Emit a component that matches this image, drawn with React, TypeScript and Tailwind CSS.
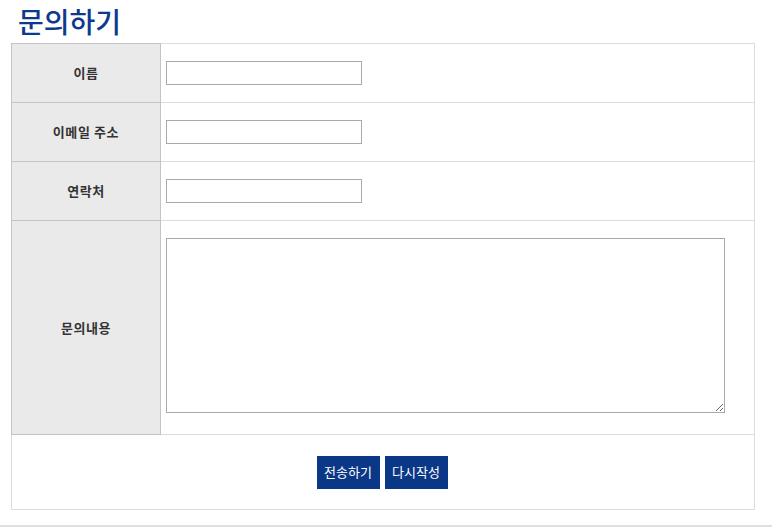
import React from "react";

const font = { fontFamily: '"Malgun Gothic", "Noto Sans CJK KR", "Noto Sans", sans-serif' };

function HeaderCell({ children }: { children: React.ReactNode }) {
  return (
    <th className="w-[149px] bg-[#eaeaea] border border-[#c4c4c4] text-[13px] tracking-[0.6px] font-bold text-[#333] text-center align-middle">
      {children}
    </th>
  );
}

export default function App() {
  return (
    <div className="w-[772px] h-[530px] bg-white" style={font}>
      <h2 className="pl-[18px] pt-[2px] h-[43px] text-[28px] leading-[38px] font-medium text-[#0d3a8c]">
        문의하기
      </h2>

      <div className="pl-[11px] pb-[15px] border-b-2 border-[#e0e0e0]">
        <table className="w-[744px] border-collapse border border-[#dcdcdc]">
          <tbody>
            <tr className="h-[59px] border-b border-[#dcdcdc]">
              <HeaderCell>이름</HeaderCell>
              <td className="px-[5px]">
                <input type="text" className="block w-[196px] h-[24px] border border-[#a9a9a9]" />
              </td>
            </tr>
            <tr className="h-[59px] border-b border-[#dcdcdc]">
              <HeaderCell>이메일 주소</HeaderCell>
              <td className="px-[5px]">
                <input type="text" className="block w-[196px] h-[24px] border border-[#a9a9a9]" />
              </td>
            </tr>
            <tr className="h-[59px] border-b border-[#dcdcdc]">
              <HeaderCell>연락처</HeaderCell>
              <td className="px-[5px]">
                <input type="text" className="block w-[196px] h-[24px] border border-[#a9a9a9]" />
              </td>
            </tr>
            <tr className="h-[214px] border-b border-[#dcdcdc]">
              <HeaderCell>문의내용</HeaderCell>
              <td className="px-[5px] pt-[17px] align-top">
                <textarea className="block w-[559px] h-[175px] border border-[#a9a9a9]" />
              </td>
            </tr>
            <tr className="h-[75px]">
              <td colSpan={2} className="text-center align-middle">
                <div className="flex justify-center gap-[5px] pr-[2px]">
                  <button className="w-[63px] h-[33px] bg-[#0a3887] text-white text-[13px]">전송하기</button>
                  <button className="w-[63px] h-[33px] bg-[#0a3887] text-white text-[13px]">다시작성</button>
                </div>
              </td>
            </tr>
          </tbody>
        </table>
      </div>
    </div>
  );
}
